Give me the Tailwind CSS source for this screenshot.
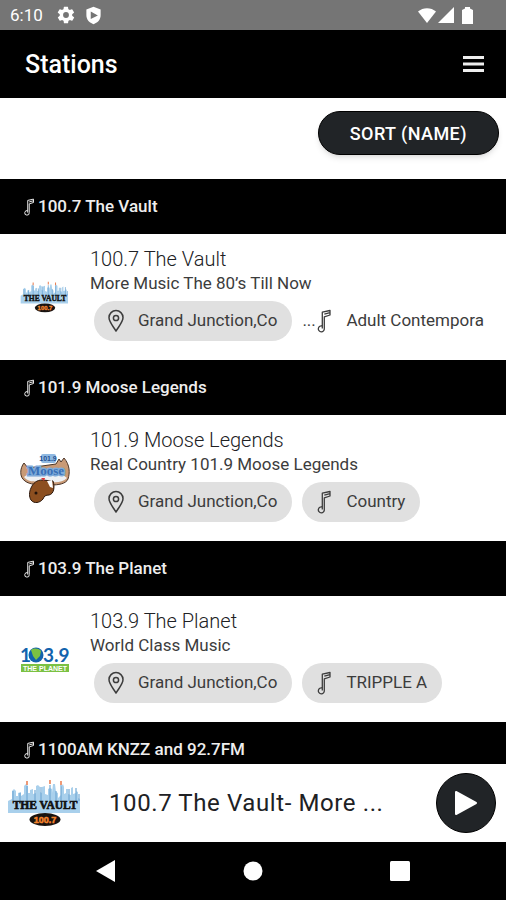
<!DOCTYPE html>
<html lang="en">
<head>
    <meta charset="UTF-8">
    <meta name="viewport" content="width=device-width, initial-scale=1.0">
    <title>Stations</title>
    <script src="https://cdn.jsdelivr.net/npm/@tailwindcss/browser@4"></script>
</head>
<body class="h-screen flex flex-col overflow-hidden bg-white font-['Roboto',sans-serif] text-[#202124]">

    <!-- Shared icons and logos -->
    <svg class="hidden">
        <symbol id="note" viewBox="0 0 18 24">
            <g fill="none" stroke="currentColor" stroke-width="1.3" stroke-linejoin="round">
                <path d="M7.300 19.500V3.200L15 1.500v4.500L9.300 7.800v11.700a3 3 0 1 1-2-2.500M9.300 5.200l5.700-1.500"/>
            </g>
        </symbol>
        <symbol id="pin" viewBox="0 0 18 24">
            <g fill="none" stroke="currentColor" stroke-width="1.5" stroke-linejoin="round">
                <path d="M9 22C6 17 2 13 2 8.600a7 7 0 0 1 14 0C16 13 12 17 9 22z"/>
                <circle cx="9" cy="9" r="2.600"/>
            </g>
        </symbol>
        <symbol id="vault" viewBox="0 0 76 48">
            <path fill="#a9d0ec" d="M1 34V22l4-2v-8l2-2 2 2v5h2v-3l3-1v4l3-2V7l2-2 2 2v7h2v-3l3-1v5l3-1V7l2-1 2 2v5l2 1V8l3-1v8l3 1v-6l2-1 2 1v4l1-9h2l1 8 2 1v5l3-3V8l2-3 1 3v7l2-1v-4h2v5l3 1V9l2-1v7l3-1v-2l2 1v6l2 1v14z"/>
            <path fill="none" stroke="#72a9d4" stroke-width="1.200" d="M6 12v10M13 14v8M20 7v15M28 11v11M34 8v14M43 6v16M49 12v10M54 6v16M62 10v12M69 9v13M72 15v7"/>
            <path fill="none" stroke="#ea8155" stroke-width="1.600" d="M20 2v4M43 1v4M54 2v4"/>
            <text x="38" y="30" text-anchor="middle" font-family="Liberation Serif, serif" font-weight="bold" font-size="11.500" fill="#111" stroke="#111" stroke-width="0.600">THE VAULT</text>
            <ellipse cx="38" cy="40.500" rx="15.500" ry="6.500" fill="#181310"/>
            <text x="38" y="44" text-anchor="middle" font-family="Liberation Sans, sans-serif" font-weight="bold" font-size="9" fill="#f5842c" stroke="#f5842c" stroke-width="0.500">100.7</text>
        </symbol>
    </svg>

    <!-- Status bar -->
    <div class="h-[30px] shrink-0 bg-[#757575] text-white flex items-center justify-between pl-[10px] pr-[33px]">
        <div class="flex items-center">
            <span class="text-[17px] mr-[13px] pt-0.5">6:10</span>
            <svg class="size-5 mr-2" viewBox="0 0 24 24" fill="currentColor"><path d="M19.400 13a7.500 7.500 0 0 0 0-2l2.100-1.600a.5.5 0 0 0 .1-.7l-2-3.400a.5.5 0 0 0-.6-.2l-2.500 1a7.300 7.300 0 0 0-1.700-1l-.4-2.700a.5.5 0 0 0-.5-.4h-4a.5.5 0 0 0-.5.4L9 5.100a7.300 7.300 0 0 0-1.700 1l-2.500-1a.5.5 0 0 0-.6.200l-2 3.400a.5.5 0 0 0 .1.700L4.500 11a7.500 7.500 0 0 0 0 2l-2.100 1.600a.5.5 0 0 0-.1.700l2 3.400c.1.200.4.300.6.200l2.500-1a7.300 7.300 0 0 0 1.700 1l.4 2.700c0 .2.200.4.500.4h4c.3 0 .5-.2.5-.4l.4-2.700a7.300 7.300 0 0 0 1.700-1l2.500 1c.2.1.5 0 .6-.2l2-3.400a.5.5 0 0 0-.1-.7zM12 15.500a3.500 3.500 0 1 1 0-7 3.500 3.500 0 0 1 0 7z"/></svg>
            <svg class="size-[19px]" viewBox="0 0 24 24"><path fill="currentColor" d="M12 1 3 4.500v7C3 17.500 7 21.500 12 23c5-1.500 9-5.500 9-11.500v-7z"/><path fill="#757575" d="m8.500 7 9 5-9 4.500z"/></svg>
        </div>
        <div class="flex items-center">
            <svg class="w-[18px] h-4 mr-0.5" viewBox="0 0 18 16" fill="currentColor"><path d="M9 16 0 4.500C5 0 13 0 18 4.500z"/></svg>
            <svg class="size-4 mr-2" viewBox="0 0 16 16" fill="currentColor"><path d="M16 0v16H0z"/></svg>
            <svg class="w-[11px] h-[17px]" viewBox="0 0 11 17" fill="currentColor"><path d="M3 1.500V0h5v1.500l3 1.500v14H0V3z"/></svg>
        </div>
    </div>

    <!-- Header -->
    <header class="h-[68px] shrink-0 bg-black text-white flex items-center justify-between pl-[25px] pr-[22px]">
        <h1 class="text-[25px] font-medium pt-0.5">Stations</h1>
        <button aria-label="Menu">
            <svg class="w-[21px] h-4" viewBox="0 0 21 16" fill="#eee"><path d="M0 0h21v3H0zM0 6.500h21v3H0zM0 13h21v3H0z"/></svg>
        </button>
    </header>

    <main class="flex-1 min-h-0 overflow-hidden">
        <div class="h-[81px] flex justify-end items-start pt-[13px] pr-[7px]">
            <button class="h-11 px-[31px] rounded-full bg-[#212427] border border-black text-white text-[18px] font-medium tracking-wide shadow-md">SORT (NAME)</button>
        </div>

        <section>
            <h2 class="h-[55px] bg-black text-[#eee] text-[17px] font-medium flex items-center pl-[22px]"><svg class="w-[14px] h-[18px] mr-0.5"><use href="#note"/></svg>100.7 The Vault</h2>
            <div class="h-[126px] flex items-center pl-5">
                <svg class="w-[50px] h-8 shrink-0 mr-5"><use href="#vault"/></svg>
                <div class="min-w-0 pb-1.5">
                    <h3 class="text-[20px] leading-6 font-light">100.7 The Vault</h3>
                    <p class="text-[17px] leading-6 text-[#3c3c3c]">More Music The 80’s Till Now</p>
                    <div class="flex gap-[10px] pl-1 mt-[6px] text-[17px] text-[#3c3c3c]">
                        <span class="h-10 rounded-full bg-[#e0e0e0] flex items-center pl-[13px] pr-[15px] whitespace-nowrap"><svg class="w-[18px] h-6 mr-[13px]"><use href="#pin"/></svg>Grand Junction,Co</span>
                        <span class="h-10 flex items-center whitespace-nowrap"><span class="w-[13px]">...</span><svg class="w-[18px] h-6 mr-[13px]"><use href="#note"/></svg>Adult Contempora</span>
                    </div>
                </div>
            </div>
        </section>

        <section>
            <h2 class="h-[55px] bg-black text-[#eee] text-[17px] font-medium flex items-center pl-[22px]"><svg class="w-[14px] h-[18px] mr-0.5"><use href="#note"/></svg>101.9 Moose Legends</h2>
            <div class="h-[126px] flex items-center pl-5">
                <svg class="size-[50px] shrink-0 mr-5" viewBox="0 0 50 50">
                    <path fill="#c99a76" stroke="#4b3528" d="M4 10c-4 5-5 14 1 18 5 4 13 3 17 5l4 3 5-4c7 0 15-1 17-6 2-6 2-14-4-21l-3 4-2-3-3 5-28 4z"/>
                    <path fill="#eef1f4" d="M4 24c5 6 12 4 18 5l4 4 5-4c6 1 12 0 16-4l-4-3-35-1z"/>
                    <path fill="#8c4f20" stroke="#2b170c" d="M22 27c-5 0-9 3-11 8-2 4-2 9 0 12 3 4 9 3 12-1 1-3 3-4 6-4 5-1 6-8 4-14z"/>
                    <path fill="#fff" d="m27 28 5-1 1 8-3-1z"/>
                    <path fill="#d33" d="m21 25 4 0-1 3z"/>
                    <circle cx="16" cy="40" r="1.500" fill="#21120a"/>
                    <rect x="21" y="1" width="15" height="9" rx="2" fill="#8fb9e2"/>
                    <text x="28" y="8" text-anchor="middle" font-family="Liberation Sans, sans-serif" font-weight="bold" font-size="7" fill="#244f91">101.9</text>
                    <text x="26" y="22" text-anchor="middle" font-family="Liberation Serif, serif" font-weight="bold" font-size="13" fill="#3970b7" stroke="#7fabd9" stroke-width="3" paint-order="stroke">Moose</text>
                </svg>
                <div class="min-w-0 pb-1.5">
                    <h3 class="text-[20px] leading-6 font-light">101.9 Moose Legends</h3>
                    <p class="text-[17px] leading-6 text-[#3c3c3c]">Real Country 101.9 Moose Legends</p>
                    <div class="flex gap-[10px] pl-1 mt-[6px] text-[17px] text-[#3c3c3c]">
                        <span class="h-10 rounded-full bg-[#e0e0e0] flex items-center pl-[13px] pr-[15px] whitespace-nowrap"><svg class="w-[18px] h-6 mr-[13px]"><use href="#pin"/></svg>Grand Junction,Co</span>
                        <span class="h-10 rounded-full bg-[#e0e0e0] flex items-center pl-[13px] pr-[15px] whitespace-nowrap"><svg class="w-[18px] h-6 mr-[13px]"><use href="#note"/></svg>Country</span>
                    </div>
                </div>
            </div>
        </section>

        <section>
            <h2 class="h-[55px] bg-black text-[#eee] text-[17px] font-medium flex items-center pl-[22px]"><svg class="w-[14px] h-[18px] mr-0.5"><use href="#note"/></svg>103.9 The Planet</h2>
            <div class="h-[126px] flex items-center pl-5">
                <svg class="w-[50px] h-[26px] shrink-0 mr-5 overflow-visible" viewBox="0 0 50 26">
                    <g font-family="Lato, sans-serif" font-weight="bold" font-size="19" fill="#1263ad">
                        <text x="0" y="16">1</text>
                        <text x="23" y="16">3.9</text>
                    </g>
                    <circle cx="16" cy="9" r="7.500" fill="#1263ad"/>
                    <path fill="#7cc142" d="M11 4c3-2 7-2 10 1l-1 5-4 4-3-4z"/>
                    <rect x="1" y="18" width="48" height="8" fill="#7bc143"/>
                    <text x="25" y="25" text-anchor="middle" font-family="Liberation Sans, sans-serif" font-weight="bold" font-size="7" fill="#fff">THE PLANET</text>
                </svg>
                <div class="min-w-0 pb-1.5">
                    <h3 class="text-[20px] leading-6 font-light">103.9 The Planet</h3>
                    <p class="text-[17px] leading-6 text-[#3c3c3c]">World Class Music</p>
                    <div class="flex gap-[10px] pl-1 mt-[6px] text-[17px] text-[#3c3c3c]">
                        <span class="h-10 rounded-full bg-[#e0e0e0] flex items-center pl-[13px] pr-[15px] whitespace-nowrap"><svg class="w-[18px] h-6 mr-[13px]"><use href="#pin"/></svg>Grand Junction,Co</span>
                        <span class="h-10 rounded-full bg-[#e0e0e0] flex items-center pl-[13px] pr-[15px] whitespace-nowrap"><svg class="w-[18px] h-6 mr-[13px]"><use href="#note"/></svg>TRIPPLE A</span>
                    </div>
                </div>
            </div>
        </section>

        <section>
            <h2 class="h-[55px] bg-black text-[#eee] text-[17px] font-medium flex items-center pl-[22px]"><svg class="w-[14px] h-[18px] mr-0.5"><use href="#note"/></svg>1100AM KNZZ and 92.7FM</h2>
        </section>
    </main>

    <!-- Player -->
    <div class="h-[78px] shrink-0 bg-white flex items-center pl-[7px] pr-[10px]">
        <svg class="w-[76px] h-12 shrink-0"><use href="#vault"/></svg>
        <p class="flex-1 pl-[26px] text-[24px] tracking-wide">100.7 The Vault- More ...</p>
        <button aria-label="Play" class="size-[60px] rounded-full bg-[#212427] border border-black text-white flex items-center justify-center">
            <svg class="w-[22px] h-[26px]" viewBox="0 0 22 26" fill="currentColor" stroke="currentColor" stroke-width="2" stroke-linejoin="round"><path d="M1 2v22l20-11z"/></svg>
        </button>
    </div>

    <!-- Navigation bar -->
    <nav class="h-[58px] shrink-0 bg-black text-white flex items-center justify-between pl-[96px] pr-[96px]">
        <button aria-label="Back"><svg class="w-5 h-[22px]" viewBox="0 0 20 22" fill="currentColor"><path d="M19 0v22L0 11z"/></svg></button>
        <button aria-label="Home"><svg class="size-5" viewBox="0 0 20 20" fill="currentColor"><circle cx="10" cy="10" r="9.500"/></svg></button>
        <button aria-label="Recents"><svg class="size-5" viewBox="0 0 20 20" fill="currentColor"><rect width="20" height="20" rx="1.500"/></svg></button>
    </nav>
</body>
</html>
